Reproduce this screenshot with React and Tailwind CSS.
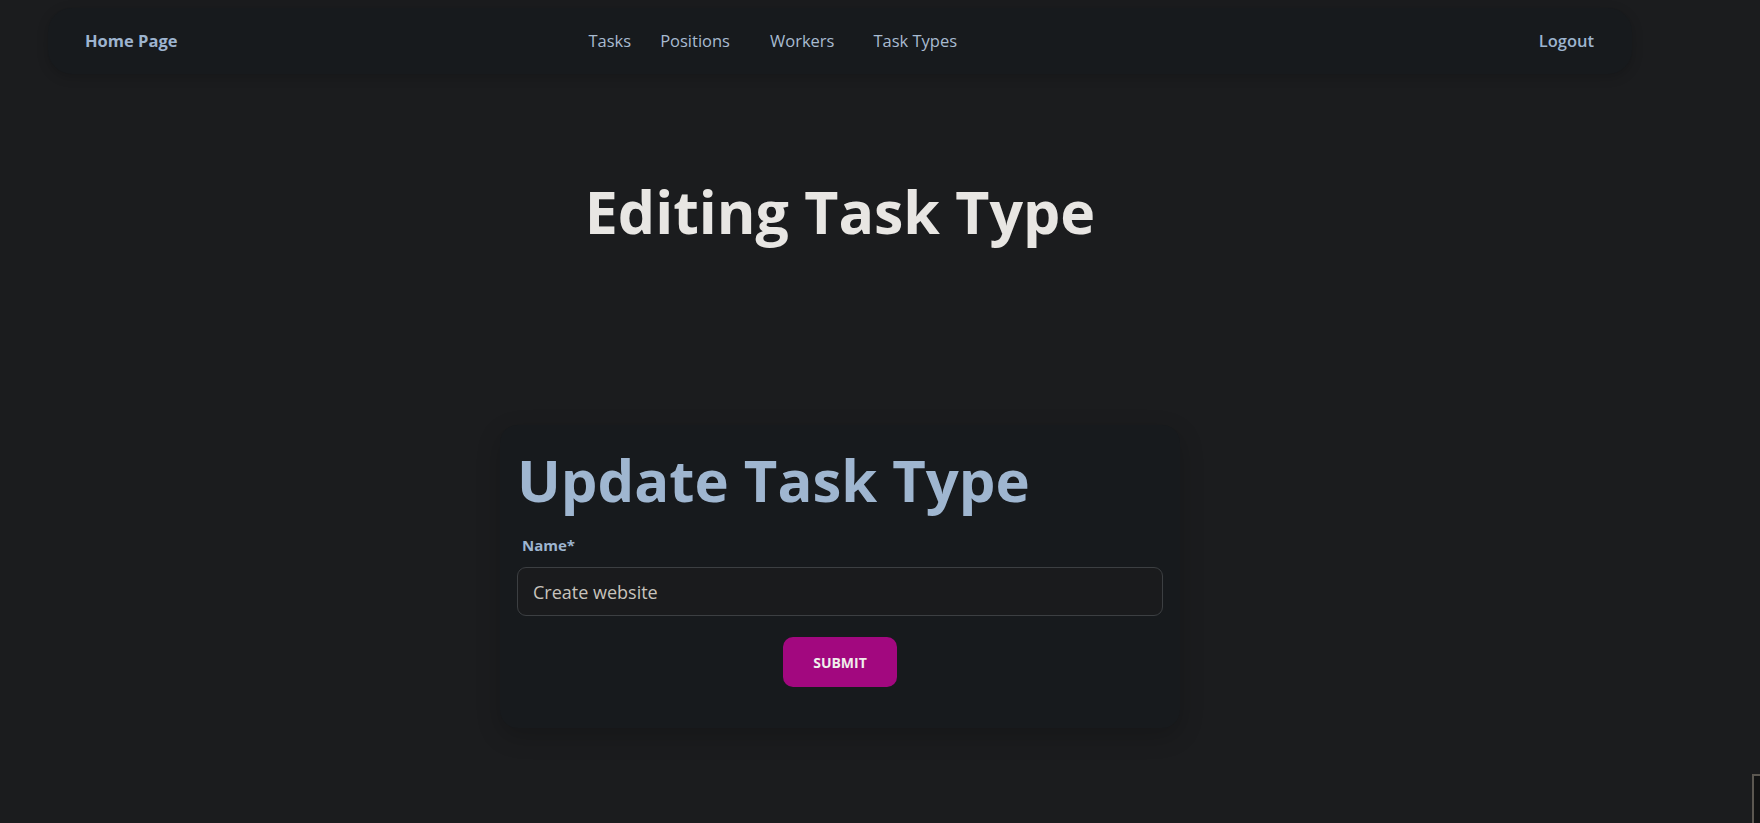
export default function App() {
  return (
    <div className="relative min-h-screen w-full overflow-hidden bg-[#1b1c1e] font-['Open_Sans',sans-serif]">
      <div className="w-[1680px]">
        {/* Navbar */}
        <nav className="mx-[48px] mt-[8px] flex h-[66px] items-center rounded-[24px] bg-[#171a1d] pl-[37px] pr-[38px] shadow-[0_3px_12px_rgba(0,0,0,0.18)]">
          <a className="text-[16.5px] font-bold text-[#9db4cf]">Home Page</a>
          <div className="ml-[411px] flex items-center text-[16.5px] text-[#a8bbd0]">
            <a>Tasks</a>
            <a className="ml-[29px]">Positions</a>
            <a className="ml-[40px]">Workers</a>
            <a className="ml-[39px]">Task Types</a>
          </div>
          <a className="ml-auto text-[16.5px] font-semibold text-[#9db4cf]">Logout</a>
        </nav>

        {/* Page title */}
        <h1 className="mt-[108px] text-center text-[59px] font-bold leading-none text-[#e8e6e3]">
          Editing Task Type
        </h1>

        {/* Form card */}
        <div className="mx-auto mt-[184px] w-[680px] rounded-[18px] bg-[#171a1d] px-[17px] pt-[26px] pb-[41px] shadow-[0_8px_24px_rgba(0,0,0,0.2)]">
          <h2 className="text-[58px] font-bold leading-none text-[#9fb6d0]">Update Task Type</h2>
          <label className="mt-[26px] ml-[5px] block text-[15px] font-bold leading-[20px] text-[#9db4cf]">
            Name*
          </label>
          <input
            className="mt-[12px] block h-[49px] w-full rounded-[9px] border border-[#3c3f42] bg-[#1a1b1d] px-[15px] text-[18px] text-[#c8c3bc] outline-none"
            defaultValue="Create website"
          />
          <div className="mt-[21px] flex justify-center">
            <button className="h-[50px] w-[114px] rounded-[10px] bg-[#a2087f] text-[14px] font-bold text-[#f0eeec]">
              SUBMIT
            </button>
          </div>
        </div>
      </div>

      {/* partial element at bottom-right edge */}
      <div className="absolute right-[-40px] top-[774px] h-[60px] w-[48px] border-[2px] border-[#5b5751] bg-[#121314]" />
    </div>
  );
}
